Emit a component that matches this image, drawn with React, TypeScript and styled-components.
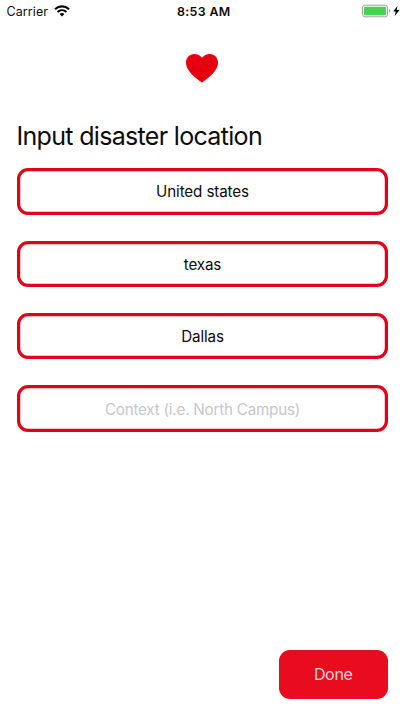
import React from "react";
import styled, { createGlobalStyle } from "styled-components";

const GlobalStyle = createGlobalStyle`
  *, *::before, *::after { box-sizing: border-box; }
  body { margin: 0; background: #fff; font-family: Inter, "Liberation Sans", sans-serif; }
`;

const Screen = styled.main`
  display: flex;
  flex-direction: column;
  height: 720px;
  width: 405px;
  overflow: hidden;
  background: #fff;
  color: #0b0b0b;
`;

const StatusBar = styled.header`
  display: grid;
  grid-template-columns: 1fr auto 1fr;
  align-items: center;
  height: 22px;
  flex: none;
  padding: 0 5px 0 6.5px;
  line-height: 21px;
`;

const Network = styled.div`
  display: flex;
  align-items: center;
  gap: 6px;
`;

const Carrier = styled.span`
  padding-top: 1px;
  font-size: 12.5px;
  letter-spacing: 0.1px;
`;

const Clock = styled.time`
  padding: 1px 0 0 1px;
  font-size: 12.4px;
  font-weight: 600;
  letter-spacing: 0.35px;
`;

const Power = styled.div`
  display: flex;
  align-items: center;
  justify-content: flex-end;
`;

const Logo = styled.div`
  display: flex;
  justify-content: center;
  flex: none;
  height: 97px;
  padding: 30.5px 1px 0 0;
`;

const Title = styled.h1`
  flex: none;
  margin: 0 0 15.3px;
  padding-left: 16.5px;
  height: 34px;
  font-size: 25px;
  line-height: 34px;
  font-weight: 400;
  letter-spacing: -0.68px;
  white-space: nowrap;
`;

const Form = styled.form`
  flex: 1;
  display: flex;
  flex-direction: column;
  gap: 26px;
  padding: 0 17px 21.5px 17px;
`;

const Field = styled.input`
  flex: none;
  width: 371px;
  height: 46.4px;
  padding: 1px 0 0;
  border: 0;
  border-radius: 11px;
  box-shadow: inset 0 0 0 3.2px #e2001a;
  background: #fff;
  color: #0b0b0b;
  font: 400 15.2px Inter, "Liberation Sans", sans-serif;
  letter-spacing: -0.13px;
  text-align: center;
  outline: none;

  &::placeholder {
    color: #c6c6cb;
    letter-spacing: -0.21px;
    opacity: 1;
  }
`;

const DoneButton = styled.button`
  align-self: flex-end;
  margin-top: auto;
  width: 109.5px;
  height: 49px;
  padding: 0;
  border: 0;
  border-radius: 11px;
  background: #e80c1e;
  color: #fbdadd;
  font: 400 16px Inter, "Liberation Sans", sans-serif;
  letter-spacing: -0.3px;
`;

const WifiIcon = () => (
  <svg width="16" height="12" viewBox="0 0 16 12" fill="none" stroke="#000">
    <path d="M1 4.2C5 .5 11 .5 15 4.2" strokeWidth="2.2" />
    <path d="M3.5 6.9c2.6-2.3 6.4-2.3 9 0" strokeWidth="2" />
    <path d="M8 11.4 5.6 9c1.3-1.2 3.5-1.2 4.8 0Z" fill="#000" stroke="none" />
  </svg>
);

const BatteryIcon = () => (
  <svg width="38" height="14" viewBox="0 0 38 14">
    <rect x=".5" y="1.2" width="25" height="11.6" rx="2.6" fill="#fff" stroke="#a0a0a0" />
    <rect x="2" y="2.7" width="22" height="8.6" rx="1" fill="#43d551" />
    <path d="M27 5.1c1.6.5 1.6 3.3 0 3.8Z" fill="#999" />
    <path d="M35.6 1.8 31.2 7.5h2.6L32.6 12.2 37.5 6.1h-2.9Z" fill="#000" />
  </svg>
);

const HeartIcon = () => (
  <svg width="34" height="31" viewBox="0 0 34 31">
    <path
      d="M17 29.8C13.2 26.5 1 19.2 1 9.6 1 4.7 4.6 1 9.2 1c3.4 0 6.1 1.4 7.8 3.8C18.7 2.4 21.4 1 24.8 1 29.4 1 33 4.7 33 9.6c0 9.6-12.2 16.9-16 20.2Z"
      fill="#e6000f"
    />
  </svg>
);

const fields = [
  { label: "Country", value: "United states" },
  { label: "State", value: "texas" },
  { label: "City", value: "Dallas" },
  { label: "Context", value: "", placeholder: "Context (i.e. North Campus)" },
];

export default function App() {
  return (
    <>
      <GlobalStyle />
      <Screen>
        <StatusBar>
          <Network>
            <Carrier>Carrier</Carrier>
            <WifiIcon />
          </Network>
          <Clock>8:53 AM</Clock>
          <Power>
            <BatteryIcon />
          </Power>
        </StatusBar>
        <Logo>
          <HeartIcon />
        </Logo>
        <Title>Input disaster location</Title>
        <Form onSubmit={(event) => event.preventDefault()}>
          {fields.map((field) => (
            <Field
              key={field.label}
              aria-label={field.label}
              defaultValue={field.value}
              placeholder={field.placeholder}
            />
          ))}
          <DoneButton type="submit">Done</DoneButton>
        </Form>
      </Screen>
    </>
  );
}
